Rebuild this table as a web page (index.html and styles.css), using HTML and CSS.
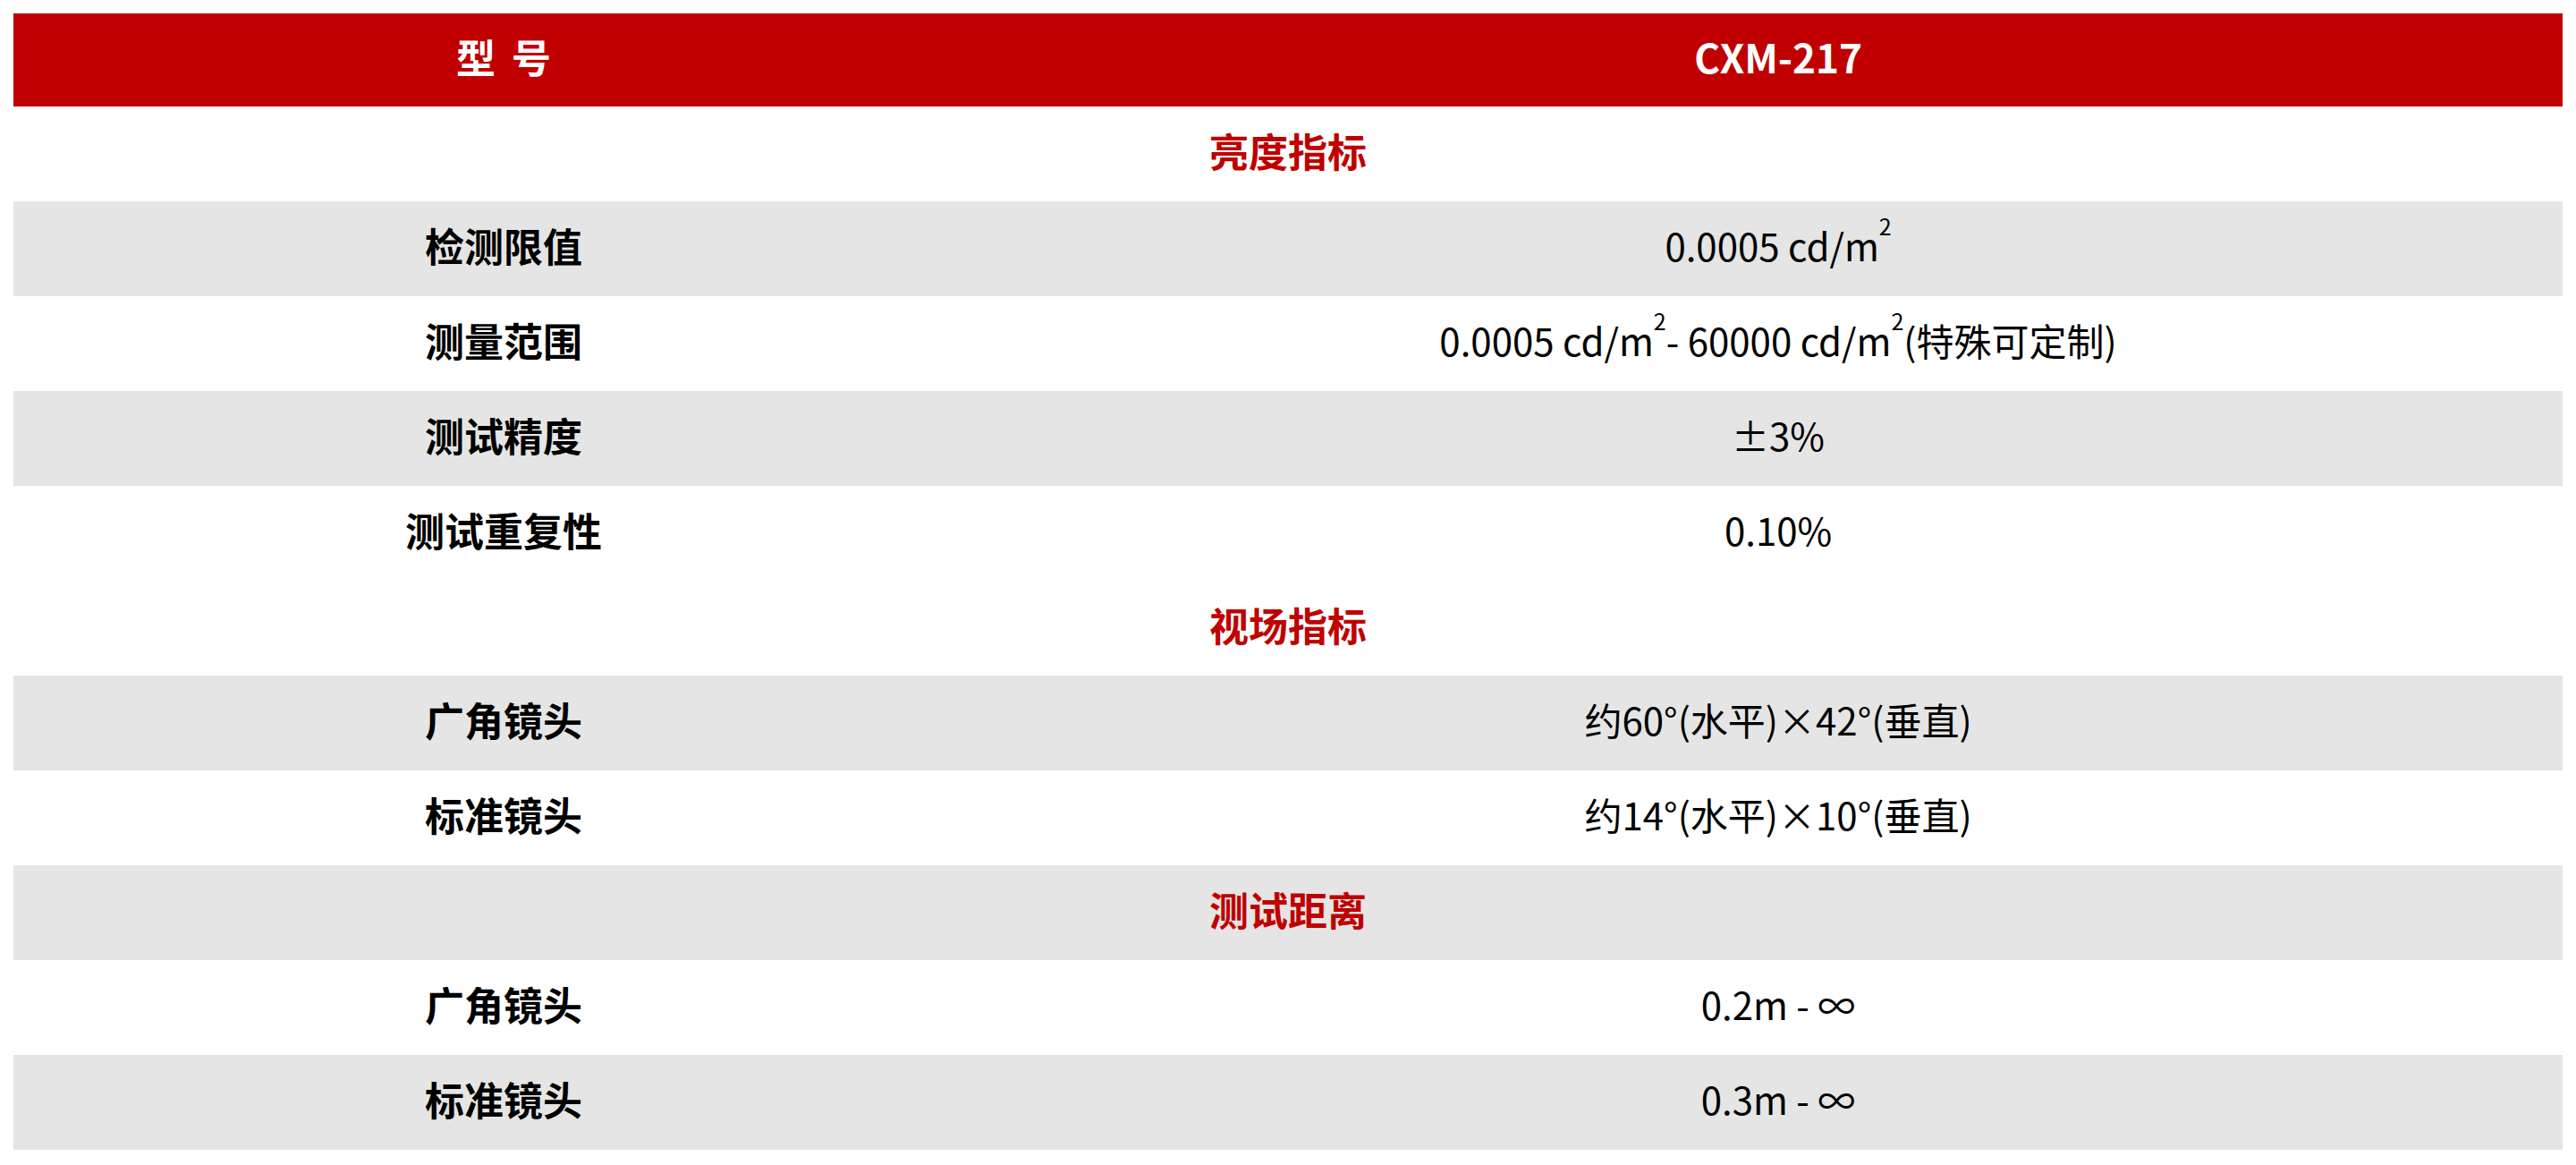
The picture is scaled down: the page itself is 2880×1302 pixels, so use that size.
FILE: index.html
```html
<!DOCTYPE html>
<html lang="zh-CN">
<head>
<meta charset="utf-8">
<title>CXM-217</title>
<link rel="stylesheet" href="styles.css">
</head>
<body>
<table class="spec">
  <colgroup>
    <col class="col-label">
    <col class="col-value">
  </colgroup>
  <thead>
    <tr class="head">
      <th class="model">型 号</th>
      <th>CXM-217</th>
    </tr>
  </thead>
  <tbody>
    <tr class="section"><td colspan="2">亮度指标</td></tr>
    <tr class="gray"><td class="label">检测限值</td><td class="value">0.0005 cd/m<sup>2</sup></td></tr>
    <tr><td class="label">测量范围</td><td class="value">0.0005 cd/m<sup>2</sup>- 60000 cd/m<sup>2</sup>(特殊可定制)</td></tr>
    <tr class="gray"><td class="label">测试精度</td><td class="value">±3%</td></tr>
    <tr><td class="label">测试重复性</td><td class="value">0.10%</td></tr>
    <tr class="section"><td colspan="2">视场指标</td></tr>
    <tr class="gray"><td class="label">广角镜头</td><td class="value">约60°(水平)×42°(垂直)</td></tr>
    <tr><td class="label">标准镜头</td><td class="value">约14°(水平)×10°(垂直)</td></tr>
    <tr class="section gray"><td colspan="2">测试距离</td></tr>
    <tr><td class="label">广角镜头</td><td class="value">0.2m - ∞</td></tr>
    <tr class="gray"><td class="label">标准镜头</td><td class="value">0.3m - ∞</td></tr>
  </tbody>
</table>
</body>
</html>
```
FILE: styles.css
```css
html, body {
  margin: 0;
  padding: 0;
  background: #ffffff;
}
body {
  padding: 15px 15px;
  font-family: "Noto Sans CJK SC", "Noto Sans", sans-serif;
  color: #000000;
}
.spec {
  width: 100%;
  border-collapse: collapse;
  border-spacing: 0;
  table-layout: fixed;
}
.col-label { width: 38.46%; }
.col-value { width: 61.54%; }
.spec th,
.spec td {
  padding: 0 0 8px 0;
  text-align: center;
  vertical-align: middle;
  font-size: 44px;
  line-height: 60px;
}
.head {
  height: 104px;
}
.head th {
  background: #c00000;
  color: #ffffff;
  font-weight: 700;
}
.model {
  word-spacing: 8px;
}
.spec tbody tr {
  height: 106px;
}
.gray td {
  background: #e5e5e5;
}
.section td {
  color: #c00000;
  font-weight: 700;
}
.label {
  font-weight: 700;
  color: #000000;
}
.spec td.value {
  font-weight: 400;
  font-size: 42px;
  color: #000000;
}
.value sup {
  font-size: 25px;
  line-height: 0;
  vertical-align: 0;
  position: relative;
  top: -29px;
}
```
